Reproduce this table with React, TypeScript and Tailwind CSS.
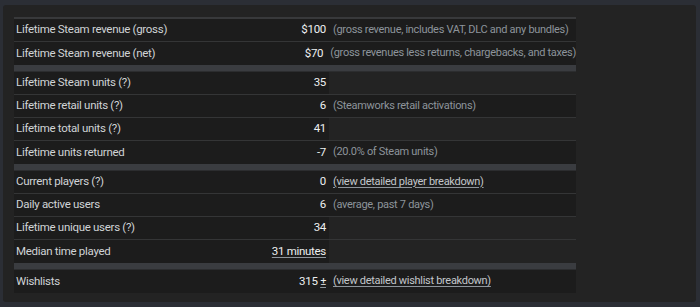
import React from 'react';

type Row = {
  label: string;
  value: React.ReactNode;
  note?: React.ReactNode;
};

const link = 'underline underline-offset-2 decoration-[#8e959c] cursor-pointer';

// groups of rows, split by the gray bands
const groups: Row[][] = [
  [
    { label: 'Lifetime Steam revenue (gross)', value: '$100', note: '(gross revenue, includes VAT, DLC and any bundles)' },
    { label: 'Lifetime Steam revenue (net)', value: '$70', note: '(gross revenues less returns, chargebacks, and taxes)' },
  ],
  [
    { label: 'Lifetime Steam units (?)', value: '35' },
    { label: 'Lifetime retail units (?)', value: '6', note: '(Steamworks retail activations)' },
    { label: 'Lifetime total units (?)', value: '41' },
    { label: 'Lifetime units returned', value: '-7', note: '(20.0% of Steam units)' },
  ],
  [
    {
      label: 'Current players (?)',
      value: '0',
      note: <span className={`${link} text-[#c3c7cb]`}>(view detailed player breakdown)</span>,
    },
    { label: 'Daily active users', value: '6', note: '(average, past 7 days)' },
    { label: 'Lifetime unique users (?)', value: '34' },
    { label: 'Median time played', value: <span className={link}>31 minutes</span> },
  ],
  [
    {
      label: 'Wishlists',
      value: (
        <span>
          315 <span className={link}>±</span>
        </span>
      ),
      note: <span className={`${link} text-[#c3c7cb]`}>(view detailed wishlist breakdown)</span>,
    },
  ],
];

const App = () => {
  return (
    <div
      className="h-[307px] w-[700px] bg-[#2b2e35] pt-[5px] pl-[3px] pr-[4px] pb-[5px]"
      style={{ fontFamily: 'Roboto, "Liberation Sans", sans-serif' }}
    >
      <div className="h-full rounded-[3px] bg-[#232323] pl-[11px] pt-[12px]">
        <div className="w-[562px] border-t-2 border-[#38393b] text-[11.5px] tracking-[-0.3px]">
          {groups.map((group, gi) => (
            <div key={gi}>
              {gi > 0 && <div className="h-[7px] border-b border-[#2c2d2f] bg-[#3a3c40]" />}
              {group.map((row, ri) => (
                <div
                  key={row.label}
                  className={`flex h-[23px] ${ri < group.length - 1 ? 'border-b border-[#343536]' : ''}`}
                >
                  <div className="flex w-[315px] items-center bg-[#1c1c1c]">
                    <span className="flex-1 pl-[2px] text-[#d0d3d6]">{row.label}</span>
                    <span className="pr-[3px] text-right text-[#eef0f1]">{row.value}</span>
                  </div>
                  <div
                    className={`flex flex-1 items-center whitespace-nowrap pl-[4px] text-[11px] text-[#8d949b] ${
                      row.note ? 'bg-[#1c1c1c]' : ''
                    }`}
                  >
                    {row.note}
                  </div>
                </div>
              ))}
            </div>
          ))}
        </div>
      </div>
    </div>
  );
};

export default App;
